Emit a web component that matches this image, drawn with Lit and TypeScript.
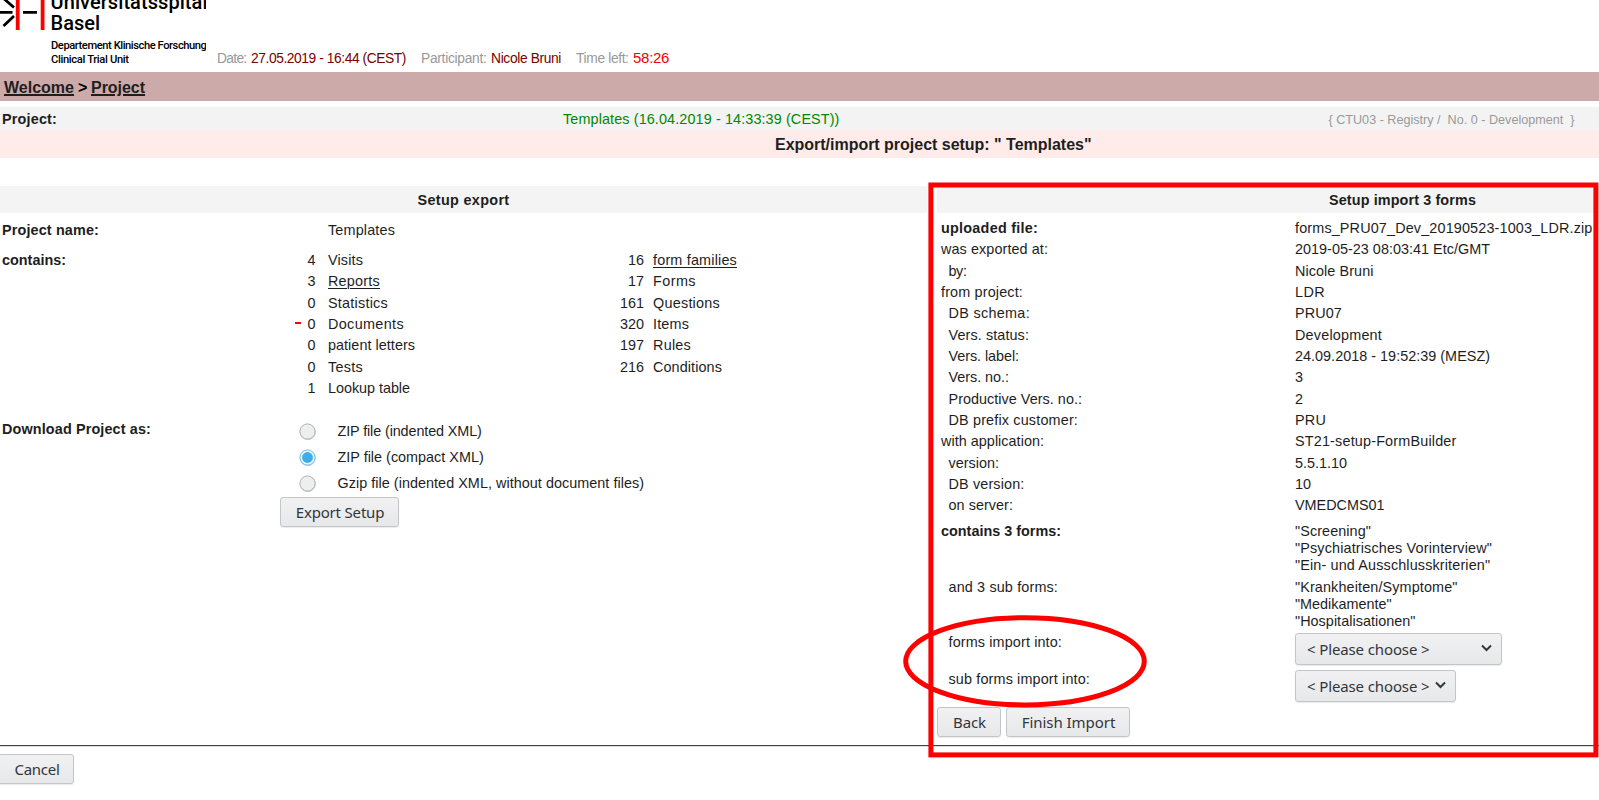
import { LitElement, html, svg, css, nothing } from "lit";
import { customElement } from "lit/decorators.js";

const ctx = document.createElement("canvas").getContext("2d")!;
const SANS = '"Liberation Sans", Arial, sans-serif';
const FONTS: Record<string, string> = {
  body: `14.4px ${SANS}`,
  strong: `bold 14.4px ${SANS}`,
  title: `bold 16px ${SANS}`,
  meta: `13.8px ${SANS}`,
  clock: `15px ${SANS}`,
  small: `12.6px ${SANS}`,
  ui: `15px "Noto Sans", sans-serif`,
  brand: `500 20px Roboto, sans-serif`,
  dept: `500 11.2px Roboto, sans-serif`,
};

/* Tracks a run of text so that it takes up the given width. */
const fit = (text: string, width: number, kind = "body", extra = "") => {
  ctx.font = FONTS[kind];
  const spacing = (width - ctx.measureText(text).width) / text.length;
  return html`<span class="t ${kind} ${extra}" style="letter-spacing:${spacing.toFixed(3)}px">${text}</span>`;
};

type Count = [string, string, number, boolean?];
const LEFT: Count[] = [
  ["4", "Visits", 35], ["3", "Reports", 52, true], ["0", "Statistics", 60], ["0", "Documents", 76],
  ["0", "patient letters", 87], ["0", "Tests", 35], ["1", "Lookup table", 82],
];
const RIGHT: Count[] = [
  ["16", "form families", 84, true], ["17", "Forms", 43], ["161", "Questions", 67],
  ["320", "Items", 36], ["197", "Rules", 38], ["216", "Conditions", 69],
];
const FORMATS: [string, number, boolean][] = [
  ["ZIP file (indented XML)", 144.5, false],
  ["ZIP file (compact XML)", 146.5, true],
  ["Gzip file (indented XML, without document files)", 306.5, false],
];
const INFO: [string, number, string, number, number][] = [
  ["uploaded file:", 97, "forms_PRU07_Dev_20190523-1003_LDR.zip", 297.5, 2],
  ["was exported at:", 107, "2019-05-23 08:03:41 Etc/GMT", 195, 0],
  ["by:", 18, "Nicole Bruni", 78.5, 1],
  ["from project:", 82, "LDR", 30, 0],
  ["DB schema:", 81.5, "PRU07", 47, 1],
  ["Vers. status:", 80.5, "Development", 87, 1],
  ["Vers. label:", 70.5, "24.09.2018 - 19:52:39 (MESZ)", 195, 1],
  ["Vers. no.:", 60.5, "3", 8, 1],
  ["Productive Vers. no.:", 133.5, "2", 8, 1],
  ["DB prefix customer:", 129.5, "PRU", 31, 1],
  ["with application:", 103, "ST21-setup-FormBuilder", 161.5, 0],
  ["version:", 50.5, "5.5.1.10", 52, 1],
  ["DB version:", 76, "10", 16, 1],
  ["on server:", 64.5, "VMEDCMS01", 89.5, 1],
];

@customElement("app-root")
export class AppRoot extends LitElement {
  static styles = css`
    :host { display: block; position: relative; width: 100%; height: 800px; overflow: hidden; background: #fff; color: #1e1e1e; }
    * { box-sizing: border-box; }
    .t { white-space: pre; }
    .body, .strong { font: 14.4px "Liberation Sans", Arial, sans-serif; line-height: inherit; }
    .strong { font-weight: bold; }
    .title { font: bold 16px "Liberation Sans", Arial, sans-serif; line-height: inherit; }
    .meta { font: 13.8px "Liberation Sans", Arial, sans-serif; line-height: inherit; }
    .clock { font: 15px "Liberation Sans", Arial, sans-serif; line-height: inherit; }
    .small { font: 12.6px "Liberation Sans", Arial, sans-serif; line-height: inherit; }
    .ui { font: 15px "Noto Sans", sans-serif; line-height: inherit; }
    .brand { font: 500 20px Roboto, sans-serif; line-height: inherit; }
    .dept { font: 500 11.2px Roboto, sans-serif; line-height: inherit; }
    .grey { color: #999; }
    .maroon { color: #700; }
    .red { color: #f00000; }
    .green { color: #080; }
    .black { color: #000; }
    .link { text-decoration: underline; text-underline-offset: 2px; text-decoration-thickness: 1px; }
    .title.link { text-decoration-thickness: 2px; text-underline-offset: 1px; }

    .top { display: flex; height: 72px; overflow: hidden; }
    .logo { display: flex; width: 206px; height: 72px; overflow: hidden; flex: none; color: #000; }
    .mark { width: 50px; height: 32px; flex: none; display: block; }
    .names { display: flex; flex-direction: column; margin-top: -8px; padding-left: 0.6px; }
    .names .row { height: 21.3px; line-height: 21.3px; white-space: nowrap; }
    .names .sub { height: 14px; line-height: 14px; padding-left: 0.4px; }
    .names .first { margin-top: 2px; }
    .status { display: flex; align-items: baseline; padding: 48px 0 0 11px; line-height: 20px; }
    .status .pair { display: flex; align-items: baseline; gap: 4.5px; margin-right: 15px; }

    .crumbs { display: flex; gap: 4px; height: 29px; line-height: 31px; padding-left: 4px; background: #ccaaa9; }
    .project { display: grid; grid-template-columns: 563px 765.5px 1fr; height: 23px; margin-top: 6px; line-height: 24px; background: #f3f3f3; }
    .project > :first-child { padding-left: 2px; }
    .project > .small { padding-top: 1px; }
    .heading { height: 28px; line-height: 29.5px; background: #ffecea; padding-left: 775px; }

    .panels { display: grid; grid-template-columns: 927px 1fr; gap: 10px; margin-top: 28px; height: 559px; }
    .head { height: 27px; line-height: 28px; background: #f4f4f4; }
    .exp .head { text-align: center; }
    .imp .head { padding-left: 392px; }
    .name { display: grid; grid-template-columns: 328px 1fr; height: 30px; line-height: 21.33px; padding-top: 7px; }
    .name > :first-child, .contains > :first-child, .download > :first-child { padding-left: 2px; }
    .contains { display: grid; grid-template-columns: 280px 350px 1fr; padding-top: 7px; line-height: 21.33px; }
    .count { display: flex; height: 21.33px; }
    .num { width: 35.5px; margin-right: 12.5px; display: flex; justify-content: flex-end; }
    .counts2 .num { width: 14px; margin-right: 9px; }
    .dash { width: 6px; height: 2px; background: #f00; margin: 8px 6.5px 0 0; flex: none; }
    .download { display: grid; grid-template-columns: 280px 1fr; padding-top: 19.5px; line-height: 21.33px; }
    .option { display: flex; height: 25.7px; align-items: flex-start; }
    .option .t { padding-top: 2.5px; }
    .radio { width: 17px; height: 17px; margin: 4.5px 21.5px 0 19px; display: block; flex: none; }

    .btn { display: inline-flex; justify-content: center; align-items: center; height: 30px; padding-left: 1px; border: 1px solid #c3c5c6; border-radius: 3px; background: linear-gradient(#f1f1f2, #e7e8ea); color: #31363b; box-shadow: 0 1px 1px rgba(0,0,0,.08); }
    .export { width: 119px; margin-top: 1.5px; }
    .back { width: 64px; }
    .finish { width: 124px; }
    .cancel { width: 76px; margin: 8px 0 0 -2px; padding-left: 2px; }

    .info { padding-top: 5px; line-height: 21.33px; }
    .line { display: grid; grid-template-columns: 354px 1fr; height: 21.33px; padding-left: 4px; }
    .line > .in { padding-left: 7.5px; }
    .line .col { display: flex; flex-direction: column; align-items: flex-start; line-height: 17px; }
    .forms { height: 56px; padding-top: 6px; line-height: 17px; }
    .forms.subs { padding-top: 6px; height: 60.4px; }
    .pick { height: 36.8px; line-height: 18px; }
    .select { display: flex; justify-content: space-between; align-items: center; height: 32px; padding: 0 9px 0 11px; border: 1px solid #c3c5c6; border-radius: 3px; background: linear-gradient(#f1f1f2, #e7e8ea); color: #31363b; box-shadow: 0 1px 1px rgba(0,0,0,.08); }
    .wide { width: 207px; }
    .narrow { width: 161px; }
    .chev { width: 11px; height: 8px; display: block; margin-top: -2px; }
    .actions { display: flex; gap: 5px; padding-top: 0.8px; }
    .rule { height: 1px; background: #444; box-shadow: 0 1px 0 #ddd; }
    .marks { position: absolute; left: 0; top: 0; width: 1599px; height: 800px; pointer-events: none; }
  `;

  private count([n, label, w, link]: Count, i: number, dashAt: number) {
    return html`<div class="count">
      <span class="num">${i === dashAt ? html`<i class="dash"></i>` : nothing}${fit(n, n.length * 8)}</span>
      ${fit(label, w, "body", link ? "link" : "")}
    </div>`;
  }

  private radio(on: boolean) {
    return html`<svg class="radio" viewBox="0 0 17 17">
      <circle cx="8.8" cy="9" r="7.6" fill="none" stroke="#000" stroke-opacity=".2" />
      <circle cx="8.5" cy="8.5" r="7.6" fill=${on ? "#e8f3fa" : "#edeef0"} stroke=${on ? "#6fbfe9" : "#b0b2b4"} />
      ${on ? svg`<circle cx="8.5" cy="8.5" r="5.4" fill="#3daee9" />` : nothing}
    </svg>`;
  }

  private select(cls: string) {
    return html`<div class="select ${cls}">
      ${fit("< Please choose >", 122.5, "ui")}
      <svg class="chev" viewBox="0 0 11 8"><path d="M1 1.5 5.5 6 10 1.5" fill="none" stroke="#31363b" stroke-width="2" /></svg>
    </div>`;
  }

  render() {
    return html`
      <header class="top">
        <div class="logo">
          <svg class="mark" viewBox="0 0 50 32">
            <path d="M0 12.3H12.5M23 12.3H37M2.5-2.5 14 7.5M3.5 26 14 16" fill="none" stroke="#000" stroke-width="2.8" />
            <path d="M17.7 0V30M42.6 0V30" stroke="#f00" stroke-width="3.8" />
          </svg>
          <div class="names">
            <div class="row">${fit("Universitätsspital", 157, "brand")}</div>
            <div class="row">${fit("Basel", 49.5, "brand")}</div>
            <div class="sub first">${fit("Departement Klinische Forschung", 155.5, "dept")}</div>
            <div class="sub">${fit("Clinical Trial Unit", 78, "dept")}</div>
          </div>
        </div>
        <div class="status">
          <div class="pair">${fit("Date:", 29.5, "meta", "grey")}${fit("27.05.2019 - 16:44 (CEST)", 155, "meta", "maroon")}</div>
          <div class="pair">${fit("Participant:", 65.5, "meta", "grey")}${fit("Nicole Bruni", 70, "meta", "maroon")}</div>
          <div class="pair">${fit("Time left:", 52.5, "meta", "grey")}${fit("58:26", 36, "clock", "red")}</div>
        </div>
      </header>
      <nav class="crumbs">
        ${fit("Welcome", 70, "title", "link")}${fit(">", 9, "title", "black")}${fit("Project", 54, "title", "link")}
      </nav>
      <div class="project">
        ${fit("Project:", 55, "strong")}
        ${fit("Templates (16.04.2019 - 14:33:39 (CEST))", 276.5, "body", "green")}
        ${fit("{ CTU03 - Registry /  No. 0 - Development  }", 246, "small", "grey")}
      </div>
      <div class="heading">${fit('Export/import project setup: " Templates"', 316.5, "title")}</div>
      <main class="panels">
        <section class="exp">
          <div class="head">${fit("Setup export", 92, "strong")}</div>
          <div class="name">${fit("Project name:", 97, "strong")}${fit("Templates", 67)}</div>
          <div class="contains">
            ${fit("contains:", 64, "strong")}
            <div>${LEFT.map((c, i) => this.count(c, i, 3))}</div>
            <div class="counts2">${RIGHT.map((c, i) => this.count(c, i, -1))}</div>
          </div>
          <div class="download">
            ${fit("Download Project as:", 149, "strong")}
            <div>
              ${FORMATS.map(([label, w, on]) => html`<div class="option">${this.radio(on)}${fit(label, w)}</div>`)}
              <div class="btn export">${fit("Export Setup", 88.5, "ui")}</div>
            </div>
          </div>
        </section>
        <section class="imp">
          <div class="head">${fit("Setup import 3 forms", 147, "strong")}</div>
          <div class="info">
            ${INFO.map(([k, kw, v, vw, mode]) => html`<div class="line">
              ${fit(k, kw, mode === 2 ? "strong" : "body", mode === 1 ? "in" : "")}${fit(v, vw)}
            </div>`)}
            <div class="line forms">
              ${fit("contains 3 forms:", 120, "strong")}
              <div class="col">${fit('"Screening"', 76)}${fit('"Psychiatrisches Vorinterview"', 197)}${fit('"Ein- und Ausschlusskriterien"', 196)}</div>
            </div>
            <div class="line forms subs">
              ${fit("and 3 sub forms:", 109.5, "body", "in")}
              <div class="col">${fit('"Krankheiten/Symptome"', 162.5)}${fit('"Medikamente"', 96.5)}${fit('"Hospitalisationen"', 120.5)}</div>
            </div>
            <div class="line pick">${fit("forms import into:", 113.5, "body", "in")}${this.select("wide")}</div>
            <div class="line pick">${fit("sub forms import into:", 141.5, "body", "in")}${this.select("narrow")}</div>
            <div class="actions">
              <div class="btn back">${fit("Back", 33, "ui")}</div>
              <div class="btn finish">${fit("Finish Import", 93.5, "ui")}</div>
            </div>
          </div>
        </section>
      </main>
      <div class="rule"></div>
      <div class="btn cancel">${fit("Cancel", 45, "ui")}</div>
      <svg class="marks" viewBox="0 0 1599 800" fill="none" stroke="#f00" stroke-width="5">
        <rect x="930.9" y="185" width="665" height="569.9" />
        <ellipse cx="1025" cy="661.3" rx="119.3" ry="43.6" />
      </svg>
    `;
  }
}
